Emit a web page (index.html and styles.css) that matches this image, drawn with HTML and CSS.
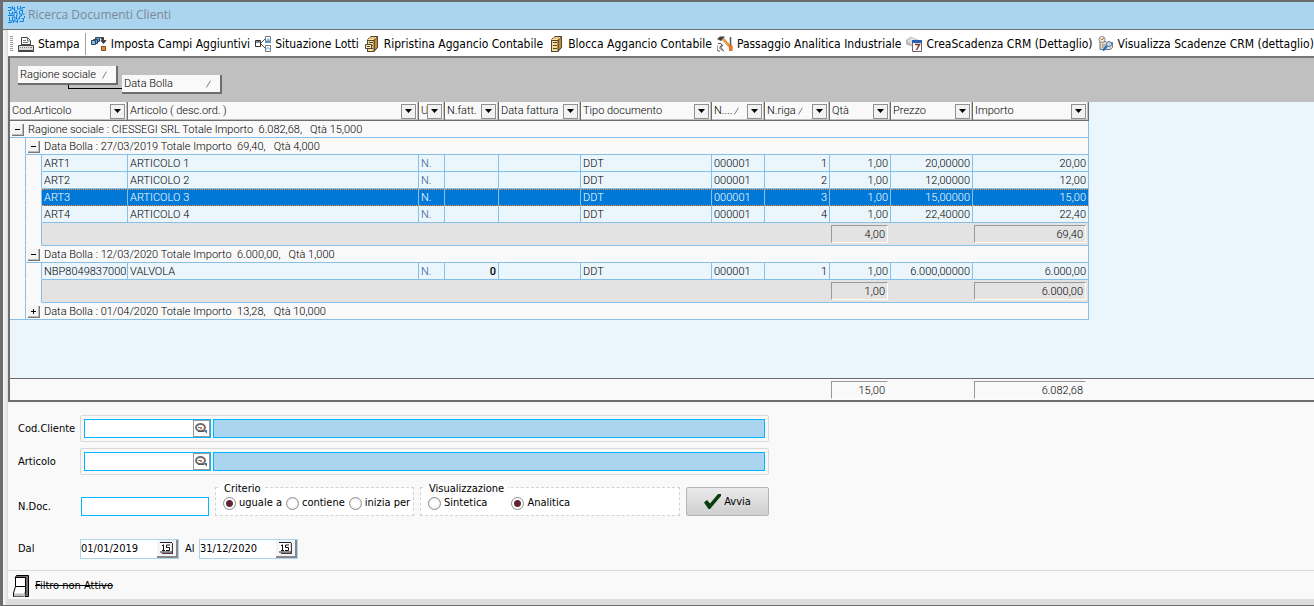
FILE: index.html
```html
<!DOCTYPE html>
<html lang="it">
<head>
<meta charset="utf-8">
<title>Ricerca Documenti Clienti</title>
<link rel="stylesheet" href="styles.css">
</head>
<body>
<svg class="defs" width="0" height="0" aria-hidden="true">
  <defs>
    <symbol id="cabinet" viewBox="0 0 16 16">
      <path d="M4 3 7 .5h6.500v11L10 15.500H3.500z" fill="#dfa64e" stroke="#4c463c"/>
      <path d="M10 4 13.500 1v10.500L10 15z" fill="#c98b2f" stroke="#4c463c"/>
      <path d="M4 3.500h6M5 2h7" stroke="#ffe2a0"/>
      <rect x="3.500" y="4.500" width="6.500" height="11" fill="#fbdb8c" stroke="#4c463c"/>
      <path d="M5 6.500h4M5 9.500h4M5 12.500h4" stroke="#4c463c"/>
    </symbol>
    <symbol id="lens" viewBox="0 0 15 13">
      <ellipse cx="6.500" cy="5.500" rx="4.500" ry="3.500" fill="#fff" stroke="#776b70" stroke-width="2"/>
      <path d="M6 5h2v2H6z" fill="#e07b35"/><path d="M4 5h2v1H4zM11 8h2v2h-2z" fill="#2888c8"/>
      <path d="M4 9.500h6M10 8.500l3 2.500" stroke="#5b5157" fill="none"/>
    </symbol>
    <symbol id="calendar" viewBox="0 0 13 12">
      <path d="M2 11.500h10.500V1" fill="none" stroke="#4a3644" stroke-width="1.500"/>
      <path d="M.5.500h11v10H.500z" fill="#fff"/><path d="M0 .500h12M0 10h12" stroke="#222"/>
      <path d="M3.500 2.500V9M2 3.500h1.500M2 8.500h3M10 3H6.500v2.500h3v3H6" fill="none" stroke="#111"/>
    </symbol>
    <symbol id="down" viewBox="0 0 7 4"><path d="M0 0h7L3.500 4z" fill="#000"/></symbol>
    <symbol id="sort" viewBox="0 0 10 8"><path d="M.5 7.500 4.500.500" stroke="#808080"/><path d="M5 .5 9 7.500H1" fill="none" stroke="#fff"/></symbol>
  </defs>
</svg>
<div class="window">
  <header class="titlebar">
    <svg width="17" height="17" viewBox="0 0 17 17" fill="none" stroke="#0b85e3" aria-hidden="true"><path d="M0 1.500h3v3H0M4.500 0v3H7M6.500 1v4h3M9.500 0v3h3V0M12 4.500h2v-3h3M1.500 6v2h3V5.500M0 9.500h6v-3h3v3M11.500 5v3h5M14.500 4v3M1.500 11v4h3v-4H7v3.500H5.500V17M8.500 9v4h3v-3h2V8M9.500 14v3M11.500 15.500h4v-3h-2M0 16.500h4M7 15.500h2M16.500 10v2"/></svg>
    <h1>Ricerca Documenti Clienti</h1>
  </header>
  <main class="body">
    <nav class="toolbar" aria-label="Comandi">
      <span class="grip"></span>
      <button class="tool print"><svg viewBox="0 0 16 16"><path d="M3.500 9V1.500h6l3 3V9" fill="#fff" stroke="#444"/><path d="M9.500 2v3h3M5 4.500h3M5 6.500h5" stroke="#777" fill="none"/><path d="M.5 9.500h15v5H.500z" fill="#ddd" stroke="#444"/><path d="M2 11.500h12" stroke="#888" stroke-dasharray="1 1"/><path d="M13 11h1v1h-1z" fill="#e05030"/><path d="M0 15.500h16M3 8.500h10" stroke="#444"/></svg>Stampa</button>
      <span class="divider"></span>
      <button class="tool"><svg viewBox="0 0 16 16"><path d="M4.500 1.500h4v4h-4z" fill="#49a3e8" stroke="#37444e"/><path d="M2.500 3.500h4v4h-4z" fill="#49a3e8" stroke="#37444e"/><path d="M.5 4.500h4v4h-4z" fill="#7ec2f5" stroke="#37444e"/><path d="M9 1.500h3.500V6M10 4.500l2.500 3 2.500-3z" fill="#333" stroke="#444"/><path d="M10.500 10.500h4v4h-4z" fill="#f08a2c" stroke="#7a4a22"/></svg>Imposta Campi Aggiuntivi</button>
      <button class="tool"><svg viewBox="0 0 16 16"><path d="M.5 4.500h5v6h-5zM1 6h5M3 4v2" fill="#fff" stroke="#333"/><path d="m6 7 4-4M6 8l4 4" stroke="#555"/><path d="M10.500.500h5v5h-5zM10.500 9.500h5v6h-5z" fill="#fff" stroke="#777"/><path d="M10 6.500h6M10 14.500l3-3 3 3" stroke="#4aa4ec" fill="none"/><path d="m12 3 1-1 2 2v1h-4z" fill="#7ac2f5"/></svg>Situazione Lotti</button>
      <button class="tool"><svg viewBox="0 0 16 16"><use href="#cabinet"/><path d="M1.500 8.500h6v4h-6z" fill="#fff0bc" stroke="#4c463c"/><path d="M3 10.500h3" stroke="#4c463c"/></svg>Ripristina Aggancio Contabile</button>
      <button class="tool"><svg viewBox="0 0 16 16"><use href="#cabinet"/></svg>Blocca Aggancio Contabile</button>
      <button class="tool"><svg viewBox="0 0 16 16"><path d="M0 3 3 .5h5L6 3 4 5z" fill="#444"/><path d="m6 3 9 10" stroke="#e2a04a" stroke-width="3"/><path d="M13.500 1v8" stroke="#555" stroke-width="1.500"/><path d="M12 9h3.500v6H12z" fill="#ee7030"/><path d="M1 7.500h3l1 2-2 1v2l2 2M6 8.500l-2 3 3 4M0 9v5l3 1.500" fill="none" stroke="#555"/></svg>Passaggio Analitica Industriale</button>
      <button class="tool"><svg viewBox="0 0 16 16"><path d="M0 4 5 .5l7 3v4l-6 3-6-2z" fill="#b9b9b9"/><path d="m1 5 5-4 5 3-5 5z" fill="#dedede"/><path d="M6.500 4.500h9v11h-9z" fill="#fff" stroke="#666"/><path d="M6 4h10v3H6z" fill="#2860b0"/><path d="M9 8.500h4.500l-3 5.500" fill="none" stroke="#8c302c" stroke-width="1.500"/></svg>CreaScadenza CRM (Dettaglio)</button>
      <button class="tool"><svg viewBox="0 0 16 16"><path d="M2 5.500h6l1 1h5.500v5l-2 2H2z" fill="#d7d7d7" stroke="#777"/><circle cx="4" cy="3.500" r="3" fill="#fff5dc" stroke="#888"/><path d="m2.500 3 1.500 1 2-2" stroke="#9a6a38" fill="none"/><path d="M4 9h4M4 11h4" stroke="#b78548"/><circle cx="11" cy="8" r="2.500" fill="#b9ddf7" stroke="#607990"/><path d="m9 10-4 4.500" stroke="#1b6ad0" stroke-width="2"/></svg>Visualizza Scadenze CRM (dettaglio)</button>
    </nav>

    <section class="grid" aria-label="Documenti">
      <div class="groupbar">
        <button class="chip linked">Ragione sociale<svg class="sort"><use href="#sort"/></svg></button>
        <button class="chip lower">Data Bolla<svg class="sort"><use href="#sort"/></svg></button>
      </div>
      <div class="rows">
        <table>
          <colgroup><col class="c-in"><col class="c-in"><col class="c-cod"><col class="c-art"><col class="c-um"><col class="c-nf"><col class="c-df"><col class="c-td"><col class="c-nd"><col class="c-nr"><col class="c-qt"><col class="c-pr"><col class="c-im"></colgroup>
          <thead>
            <tr>
              <th colspan="3"><div class="head"><span>Cod.Articolo</span><button aria-label="Filtra Cod.Articolo"><svg><use href="#down"/></svg></button></div></th>
              <th><div class="head"><span>Articolo ( desc.ord. )</span><button aria-label="Filtra Articolo"><svg><use href="#down"/></svg></button></div></th>
              <th><div class="head tight"><span>U</span><button aria-label="Filtra U.M."><svg><use href="#down"/></svg></button></div></th>
              <th><div class="head"><span>N.fatt.</span><button aria-label="Filtra N.fatt."><svg><use href="#down"/></svg></button></div></th>
              <th><div class="head"><span>Data fattura</span><button aria-label="Filtra Data fattura"><svg><use href="#down"/></svg></button></div></th>
              <th><div class="head"><span>Tipo documento</span><button aria-label="Filtra Tipo documento"><svg><use href="#down"/></svg></button></div></th>
              <th><div class="head"><span>N....</span><svg class="sort"><use href="#sort"/></svg><button aria-label="Filtra N."><svg><use href="#down"/></svg></button></div></th>
              <th><div class="head"><span>N.riga</span><svg class="sort"><use href="#sort"/></svg><button aria-label="Filtra N.riga"><svg><use href="#down"/></svg></button></div></th>
              <th><div class="head"><span>Qtà</span><button aria-label="Filtra Qtà"><svg><use href="#down"/></svg></button></div></th>
              <th><div class="head"><span>Prezzo</span><button aria-label="Filtra Prezzo"><svg><use href="#down"/></svg></button></div></th>
              <th><div class="head"><span>Importo</span><button aria-label="Filtra Importo"><svg><use href="#down"/></svg></button></div></th>
            </tr>
          </thead>
          <tbody>
            <tr class="group"><td colspan="13"><button class="toggle minus" aria-label="Comprimi"></button>Ragione sociale : CIESSEGI SRL Totale Importo&nbsp; 6.082,68,&nbsp;&nbsp; Qtà 15,000</td></tr>
            <tr class="group"><td class="indent"></td><td colspan="12"><button class="toggle minus" aria-label="Comprimi"></button>Data Bolla : 27/03/2019 Totale Importo&nbsp; 69,40,&nbsp;&nbsp; Qtà 4,000</td></tr>
            <tr><td class="indent"></td><td class="indent"></td><td>ART1</td><td>ARTICOLO 1</td><td class="soft">N.</td><td></td><td></td><td>DDT</td><td>000001</td><td class="num">1</td><td class="num">1,00</td><td class="num">20,00000</td><td class="num">20,00</td></tr>
            <tr><td class="indent"></td><td class="indent"></td><td>ART2</td><td>ARTICOLO 2</td><td class="soft">N.</td><td></td><td></td><td>DDT</td><td>000001</td><td class="num">2</td><td class="num">1,00</td><td class="num">12,00000</td><td class="num">12,00</td></tr>
            <tr class="selected"><td class="indent"></td><td class="indent"></td><td>ART3</td><td>ARTICOLO 3</td><td class="soft">N.</td><td></td><td></td><td>DDT</td><td>000001</td><td class="num">3</td><td class="num">1,00</td><td class="num">15,00000</td><td class="num">15,00</td></tr>
            <tr><td class="indent"></td><td class="indent"></td><td>ART4</td><td>ARTICOLO 4</td><td class="soft">N.</td><td></td><td></td><td>DDT</td><td>000001</td><td class="num">4</td><td class="num">1,00</td><td class="num">22,40000</td><td class="num">22,40</td></tr>
            <tr class="sum"><td class="indent"></td><td class="indent"></td><td colspan="8"></td><td><output>4,00</output></td><td></td><td><output>69,40</output></td></tr>
            <tr class="group"><td class="indent"></td><td colspan="12"><button class="toggle minus" aria-label="Comprimi"></button>Data Bolla : 12/03/2020 Totale Importo&nbsp; 6.000,00,&nbsp;&nbsp; Qtà 1,000</td></tr>
            <tr><td class="indent"></td><td class="indent"></td><td>NBP8049837000X</td><td>VALVOLA</td><td class="soft">N.</td><td class="num strong">0</td><td></td><td>DDT</td><td>000001</td><td class="num">1</td><td class="num">1,00</td><td class="num">6.000,00000</td><td class="num">6.000,00</td></tr>
            <tr class="sum"><td class="indent"></td><td class="indent"></td><td colspan="8"></td><td><output>1,00</output></td><td></td><td><output>6.000,00</output></td></tr>
            <tr class="group last"><td class="indent"></td><td colspan="12"><button class="toggle plus" aria-label="Espandi"></button>Data Bolla : 01/04/2020 Totale Importo&nbsp; 13,28,&nbsp;&nbsp; Qtà 10,000</td></tr>
          </tbody>
        </table>
      </div>
      <div class="totals">
        <table>
          <colgroup><col class="c-lead"><col class="c-qt"><col class="c-pr"><col class="c-im"></colgroup>
          <tbody><tr class="sum"><td></td><td><output>15,00</output></td><td></td><td><output>6.082,68</output></td></tr></tbody>
        </table>
      </div>
    </section>

    <form class="filters">
      <div class="line">
        <label class="name" for="cliente">Cod.Cliente</label>
        <div class="lookup"><span class="code"><input id="cliente" type="text"><button type="button" aria-label="Cerca cliente"><svg><use href="#lens"/></svg></button></span><input class="desc" type="text" readonly aria-label="Descrizione cliente"></div>
      </div>
      <div class="line">
        <label class="name" for="articolo">Articolo</label>
        <div class="lookup"><span class="code"><input id="articolo" type="text"><button type="button" aria-label="Cerca articolo"><svg><use href="#lens"/></svg></button></span><input class="desc" type="text" readonly aria-label="Descrizione articolo"></div>
      </div>
      <div class="line options">
        <label class="name" for="ndoc">N.Doc.</label>
        <input id="ndoc" class="doc" type="text">
        <div class="box criteria" role="radiogroup" aria-labelledby="crit">
          <span class="legend" id="crit">Criterio</span>
          <div class="choices"><label><input type="radio" name="crit" checked>uguale a</label><label><input type="radio" name="crit">contiene</label><label><input type="radio" name="crit">inizia per</label></div>
        </div>
        <div class="box view" role="radiogroup" aria-labelledby="vis">
          <span class="legend" id="vis">Visualizzazione</span>
          <div class="choices wide"><label><input type="radio" name="vis">Sintetica</label><label><input type="radio" name="vis" checked>Analitica</label></div>
        </div>
        <button class="run" type="button"><svg width="17" height="15" viewBox="0 0 17 15"><path d="M0 8.500 3 6l3 3.500L14 0h3v2L6 15H4.500z" fill="#0a3d0c"/></svg>Avvia</button>
      </div>
      <div class="line dates">
        <label class="name" for="dal">Dal</label>
        <span class="date"><input id="dal" type="text" value="01/01/2019"><button type="button" aria-label="Calendario dal"><svg><use href="#calendar"/></svg></button></span>
        <label for="al">Al</label>
        <span class="date"><input id="al" type="text" value="31/12/2020"><button type="button" aria-label="Calendario al"><svg><use href="#calendar"/></svg></button></span>
      </div>
    </form>
    <footer class="status">
      <button class="filter"><svg width="17" height="23" viewBox="0 0 17 23"><path d="M3.500.500h12v21H12V3H2z" fill="#776b70" stroke="#000"/><path d="M2.500 2.500h10v9h-10z" fill="#fff" stroke="#000"/><path d="M2.500 11.500h10v5.500l-2 4.500H.500V18z" fill="#fff" stroke="#000"/><path d="M1 18.500h10l1-1v4H1z" fill="#c0c0c0"/></svg><s>Filtro non Attivo</s></button>
    </footer>
  </main>
</div>
</body>
</html>
```
FILE: styles.css
```css
* { box-sizing: border-box; }
body {
  margin: 0;
  font: 11px/14px "DejaVu Sans Condensed", Tahoma, sans-serif;
  color: #000;
  background: #dadada;
}
button, input { font: inherit; color: inherit; margin: 0; padding: 0; }
.defs { position: absolute; }
.window {
  min-height: 100vh;
  display: flex;
  flex-direction: column;
  border: solid #6d6d6d;
  border-width: 2px 0 1px 3px;
}
.titlebar {
  display: flex;
  align-items: center;
  gap: 3px;
  height: 28px;
  padding: 0 5px 2px;
  background: #abd4ee;
  border-bottom: 1px solid #6d6d6d;
}
h1 { margin: 0; font: 12px/16px "Open Sans", sans-serif; color: #7d8795; }
.body {
  flex: 1;
  display: flex;
  flex-direction: column;
  padding: 0 0 6px 5px;
  background: linear-gradient(90deg, #f8f8f8, #dcdcdc 5px);
}

/* Toolbar */
.toolbar {
  display: flex;
  align-items: center;
  height: 26px;
  gap: 5px;
  padding: 1px 0 0 2px;
  background: #fff;
  overflow: hidden;
  white-space: nowrap;
}
.grip { flex: none; width: 3px; height: 16px; background: repeating-linear-gradient(#999 0 1px, #fff 1px 2px); }
.divider { flex: none; width: 1px; height: 22px; background: #a0a0a0; }
.tool {
  display: flex;
  align-items: center;
  gap: 4px;
  border: 0;
  background: none;
  font-size: 12px;
  line-height: 16px;
}
.tool svg { width: 16px; height: 16px; }

/* Grid */
.grid {
  border: solid #6d6d6d;
  border-width: 2px 0 2px 2px;
  border-top-color: #777;
  font: 300 11px/14px Roboto, "Open Sans", sans-serif;
  overflow: hidden;
}
.groupbar {
  display: flex;
  align-items: flex-start;
  gap: 4px;
  height: 44px;
  padding: 8px;
  background: #c0c0c0;
}
.chip {
  position: relative;
  display: flex;
  align-items: center;
  justify-content: space-between;
  width: 100px;
  height: 19px;
  padding: 1px 4px 0 2px;
  white-space: nowrap;
  background: #f9f9f9;
  border: solid #6d6d6d;
  border-width: 0 2px 2px 0;
}
.lower { margin-top: 9px; }
.linked::after {
  content: "";
  position: absolute;
  left: 50px;
  top: 19px;
  width: 54px;
  height: 3px;
  border: solid #000;
  border-width: 0 0 1px 1px;
}
.sort { flex: none; width: 10px; height: 8px; }
.rows { min-height: 276px; background: #eaf5fc; }
table { width: 1079px; table-layout: fixed; border-collapse: separate; border-spacing: 0; }
.c-in { width: 16px; }
.c-cod { width: 86px; }
.c-art { width: 291px; }
.c-um { width: 26px; }
.c-nf { width: 54px; }
.c-df, .c-pr { width: 82px; }
.c-td { width: 131px; }
.c-nd { width: 53px; }
.c-nr { width: 65px; }
.c-qt { width: 61px; }
.c-im { width: 116px; }
.c-lead { width: 820px; }
th {
  height: 19px;
  padding: 0;
  font-weight: 300;
  text-align: left;
  background: #f9f9f9;
  border: solid #6d6d6d;
  border-width: 0 1px 1px 0;
  box-shadow: inset -1px -1px #c0c0c0;
}
.head { display: flex; align-items: center; height: 17px; padding: 0 2px; gap: 2px; }
.head span { flex: none; white-space: nowrap; line-height: 16px; }
.head button {
  flex: none;
  display: grid;
  place-items: center;
  width: 15px;
  height: 15px;
  margin-left: auto;
  background: #f2f2f2;
  border: 1px solid #909090;
}
.tight { gap: 0; }
.tight span { flex: 0 1 auto; min-width: 0; }
.head button svg { width: 7px; height: 4px; }
td {
  height: 17px;
  padding: 1px 2px 0;
  overflow: hidden;
  white-space: nowrap;
  border: solid #86bfe8;
  border-width: 0 1px 1px 0;
  background: #eaf5fc;
}
.num { text-align: right; }
.soft { color: #34608c; }
.strong { font-weight: 500; }
.group td, td.indent { background: #f9f9f9; }
td.indent { border-bottom-color: #f9f9f9; padding: 0; }
.last td.indent { border-bottom-color: #86bfe8; }
.selected td:not(.indent) {
  color: #fff;
  background: #0078d7;
  padding-top: 0;
  border-top: 1px dotted #ff8728;
  border-bottom: 1px dotted #ff8728;
}
.toggle {
  position: relative;
  width: 12px;
  height: 12px;
  margin: 0 4px 0 0;
  vertical-align: middle;
  background: #f4f4f4;
  border: solid #777;
  border-width: 0 1px 1px 0;
  box-shadow: inset -1px -1px #bbb;
}
.toggle::before { content: ""; position: absolute; left: 3px; top: 5px; width: 5px; height: 1px; background: #000; }
.plus::after { content: ""; position: absolute; left: 5px; top: 3px; width: 1px; height: 5px; background: #000; }
.sum td:not(.indent) { height: 23px; padding: 0 2px 0 1px; background: #e3e3e3; border-right-color: #e3e3e3; }
.sum td:last-child:not(.indent) { border-right-color: #86bfe8; }
.sum output {
  display: block;
  height: 18px;
  padding: 2px 2px 0;
  text-align: right;
  border: 1px solid;
  border-color: #999 #fff #fff #999;
}
.totals { border-top: 1px solid #6d6d6d; background: #f9f9f9; }
.totals .sum td:not(.indent) { height: 21px; background: none; border: 0; padding-right: 3px; }

/* Filters */
.filters { padding: 13px 10px 11px; background: #f9f9f9; }
.line { display: flex; align-items: center; margin-bottom: 6px; }
.name { flex: none; width: 62px; }
.lookup {
  display: flex;
  gap: 2px;
  width: 689px;
  height: 27px;
  padding: 3px;
  border: 1px solid #d9d9d9;
  border-radius: 2px;
}
.code { display: flex; width: 127px; background: #fff; border: 1px solid #00b7ff; }
.code input { flex: 1; min-width: 0; border: 0; background: none; }
.code button { display: grid; place-items: center; width: 17px; background: #fff; border: 1px solid #999; }
.code svg { width: 15px; height: 13px; }
.desc { flex: 1; min-width: 0; background: #abd4ee; border: 1px solid #00b7ff; }
.options { align-items: flex-end; height: 35px; gap: 6px; margin-bottom: 23px; }
.options .name { width: 57px; line-height: 18px; }
.doc { width: 128px; height: 19px; background: #fff; border: 1px solid #00b7ff; }
.box { position: relative; height: 29px; padding: 7px 7px 0; background: #fff; border: 1px dashed #d2d2d2; }
.criteria { width: 199px; }
.view { width: 260px; }
.legend { position: absolute; left: 4px; top: -6px; padding: 0 4px; background: #fcfcfc; }
.choices { display: flex; gap: 4px; white-space: nowrap; }
.choices.wide { gap: 24px; }
.choices label { display: flex; align-items: center; gap: 3px; height: 16px; }
.choices input {
  appearance: none;
  width: 13px;
  height: 13px;
  border: 1px solid #8c8c8c;
  border-radius: 50%;
  background: radial-gradient(#fff 40%, #ddd);
}
.choices input:checked { background: radial-gradient(#5e2733 0 3px, #fff 4px); }
.run {
  display: flex;
  align-items: center;
  justify-content: center;
  gap: 3px;
  width: 83px;
  height: 29px;
  background: linear-gradient(#eaeaea, #cfcfcf);
  border: 1px solid #b4b4b4;
  border-radius: 2px;
}
.dates { margin: 0; }
.date { display: flex; width: 99px; height: 20px; margin-right: 6px; background: #fff; border: 1px solid #abd4ee; }
.dates label:not(.name) { width: 14px; }
.date input { flex: 1; min-width: 0; border: 0; background: none; height: 16px; }
.date button {
  display: grid;
  place-items: center;
  width: 21px;
  background: #f4f4f4;
  border: solid #888;
  border-width: 0 2px 2px 0;
}
.date svg { width: 13px; height: 12px; }
.status { flex: 1; display: flex; align-items: center; padding: 2px 0 0 5px; background: #f9f9f9; border-top: 1px solid #d9d9d9; }
.filter { display: flex; align-items: center; gap: 5px; border: 0; background: none; }
```
